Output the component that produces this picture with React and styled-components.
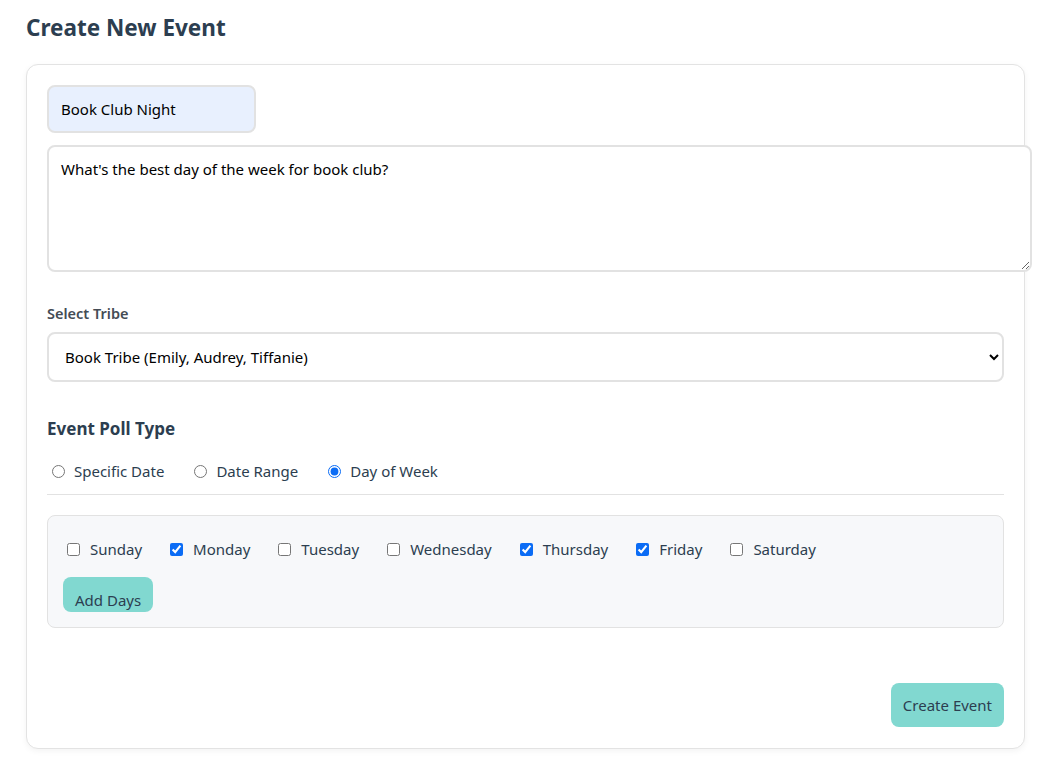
import React, { useState } from "react";
import styled, { createGlobalStyle } from "styled-components";

const Global = createGlobalStyle`
  * { box-sizing: content-box; }
  body {
    margin: 0;
    background: #ffffff;
    font-family: "Noto Sans", "Open Sans", sans-serif;
    color: #2c3e50;
  }
`;

const Page = styled.div`
  padding: 7px 12px 14px 26px;
`;

const Title = styled.h2`
  margin: 6px 0 21px;
  font-size: 22.5px;
  line-height: 30px;
  font-weight: 700;
  color: #2c3e50;
`;

const Card = styled.div`
  width: 957px;
  padding: 20px 20px 21px;
  border: 1px solid #e3e3e3;
  border-radius: 12px;
  background: #fff;
  box-shadow: 0 2px 6px rgba(0, 0, 0, 0.05);
`;

const TextInput = styled.input`
  display: block;
  width: 181px;
  height: 24px;
  padding: 10px 12px 10px;
  border: 2px solid #e2e2e2;
  border-radius: 8px;
  background: #e8f0fe;
  font-family: inherit;
  font-size: 15px;
  color: #000;
  outline: none;
`;

const TextArea = styled.textarea`
  display: block;
  width: 100%;
  height: 99px;
  margin-top: 12px;
  padding: 12px;
  border: 2px solid #e2e2e2;
  border-radius: 8px;
  font-family: inherit;
  font-size: 15px;
  line-height: 20px;
  color: #000;
  resize: vertical;
  outline: none;
`;

const Label = styled.label`
  display: block;
  margin: 32px 0 10px;
  font-size: 14.5px;
  line-height: 18px;
  font-weight: 600;
  color: #444c55;
`;

const Select = styled.select`
  display: block;
  width: 100%;
  box-sizing: border-box;
  height: 50px;
  padding: 0 12px;
  border: 2px solid #e2e2e2;
  border-radius: 8px;
  background: #fff;
  font-family: inherit;
  font-size: 15px;
  color: #000;
  outline: none;
`;

const SectionTitle = styled.h3`
  margin: 35px 0 19px;
  font-size: 17px;
  line-height: 24px;
  font-weight: 700;
  color: #2c3e50;
`;

const RadioRow = styled.div`
  display: flex;
  gap: 25px;
  padding-bottom: 12px;
  border-bottom: 1px solid #e2e2e2;
`;

const RadioLabel = styled.label`
  display: flex;
  align-items: center;
  font-size: 15px;
  line-height: 22px;
  color: #2c3e50;
  input {
    width: 13px;
    height: 13px;
    margin: 0 9px 0 5px;
    accent-color: #0b6cf5;
  }
`;

const DaysBox = styled.div`
  margin-top: 20px;
  padding: 15px;
  border: 1px solid #e2e2e2;
  border-radius: 8px;
  background: #f7f8fa;
`;

const DaysRow = styled.div`
  display: flex;
  flex-wrap: wrap;
  gap: 24px;
  padding: 8px 0 18px;
`;

const DayLabel = styled.label`
  display: flex;
  align-items: center;
  font-size: 15px;
  line-height: 20px;
  color: #2c3e50;
  input {
    width: 13px;
    height: 13px;
    margin: 0 10px 0 4px;
    accent-color: #0b6cf5;
  }
`;

const TealButton = styled.button`
  border: none;
  background: #81d8d0;
  color: #2c3e50;
  font-family: inherit;
  font-size: 15px;
  cursor: pointer;
  border-radius: 8px;
  padding: ${(p) => (p.$small ? "13px 12px 2px" : "12px 12px")};
  line-height: 20px;
`;

const Footer = styled.div`
  display: flex;
  justify-content: flex-end;
  margin-top: 55px;
`;

const days = ["Sunday", "Monday", "Tuesday", "Wednesday", "Thursday", "Friday", "Saturday"];

export default function App() {
  const [checked, setChecked] = useState({ Monday: true, Thursday: true, Friday: true });
  const [poll, setPoll] = useState("week");
  return (
    <Page>
      <Global />
      <Title>Create New Event</Title>
      <Card>
        <TextInput defaultValue="Book Club Night" />
        <TextArea defaultValue="What's the best day of the week for book club?" />
        <Label>Select Tribe</Label>
        <Select defaultValue="book">
          <option value="book">Book Tribe (Emily, Audrey, Tiffanie)</option>
        </Select>
        <SectionTitle>Event Poll Type</SectionTitle>
        <RadioRow>
          {[
            ["specific", "Specific Date"],
            ["range", "Date Range"],
            ["week", "Day of Week"],
          ].map(([v, t]) => (
            <RadioLabel key={v}>
              <input type="radio" name="poll" checked={poll === v} onChange={() => setPoll(v)} />
              {t}
            </RadioLabel>
          ))}
        </RadioRow>
        <DaysBox>
          <DaysRow>
            {days.map((d) => (
              <DayLabel key={d}>
                <input
                  type="checkbox"
                  checked={!!checked[d]}
                  onChange={() => setChecked({ ...checked, [d]: !checked[d] })}
                />
                {d}
              </DayLabel>
            ))}
          </DaysRow>
          <TealButton $small>Add Days</TealButton>
        </DaysBox>
        <Footer>
          <TealButton>Create Event</TealButton>
        </Footer>
      </Card>
    </Page>
  );
}
